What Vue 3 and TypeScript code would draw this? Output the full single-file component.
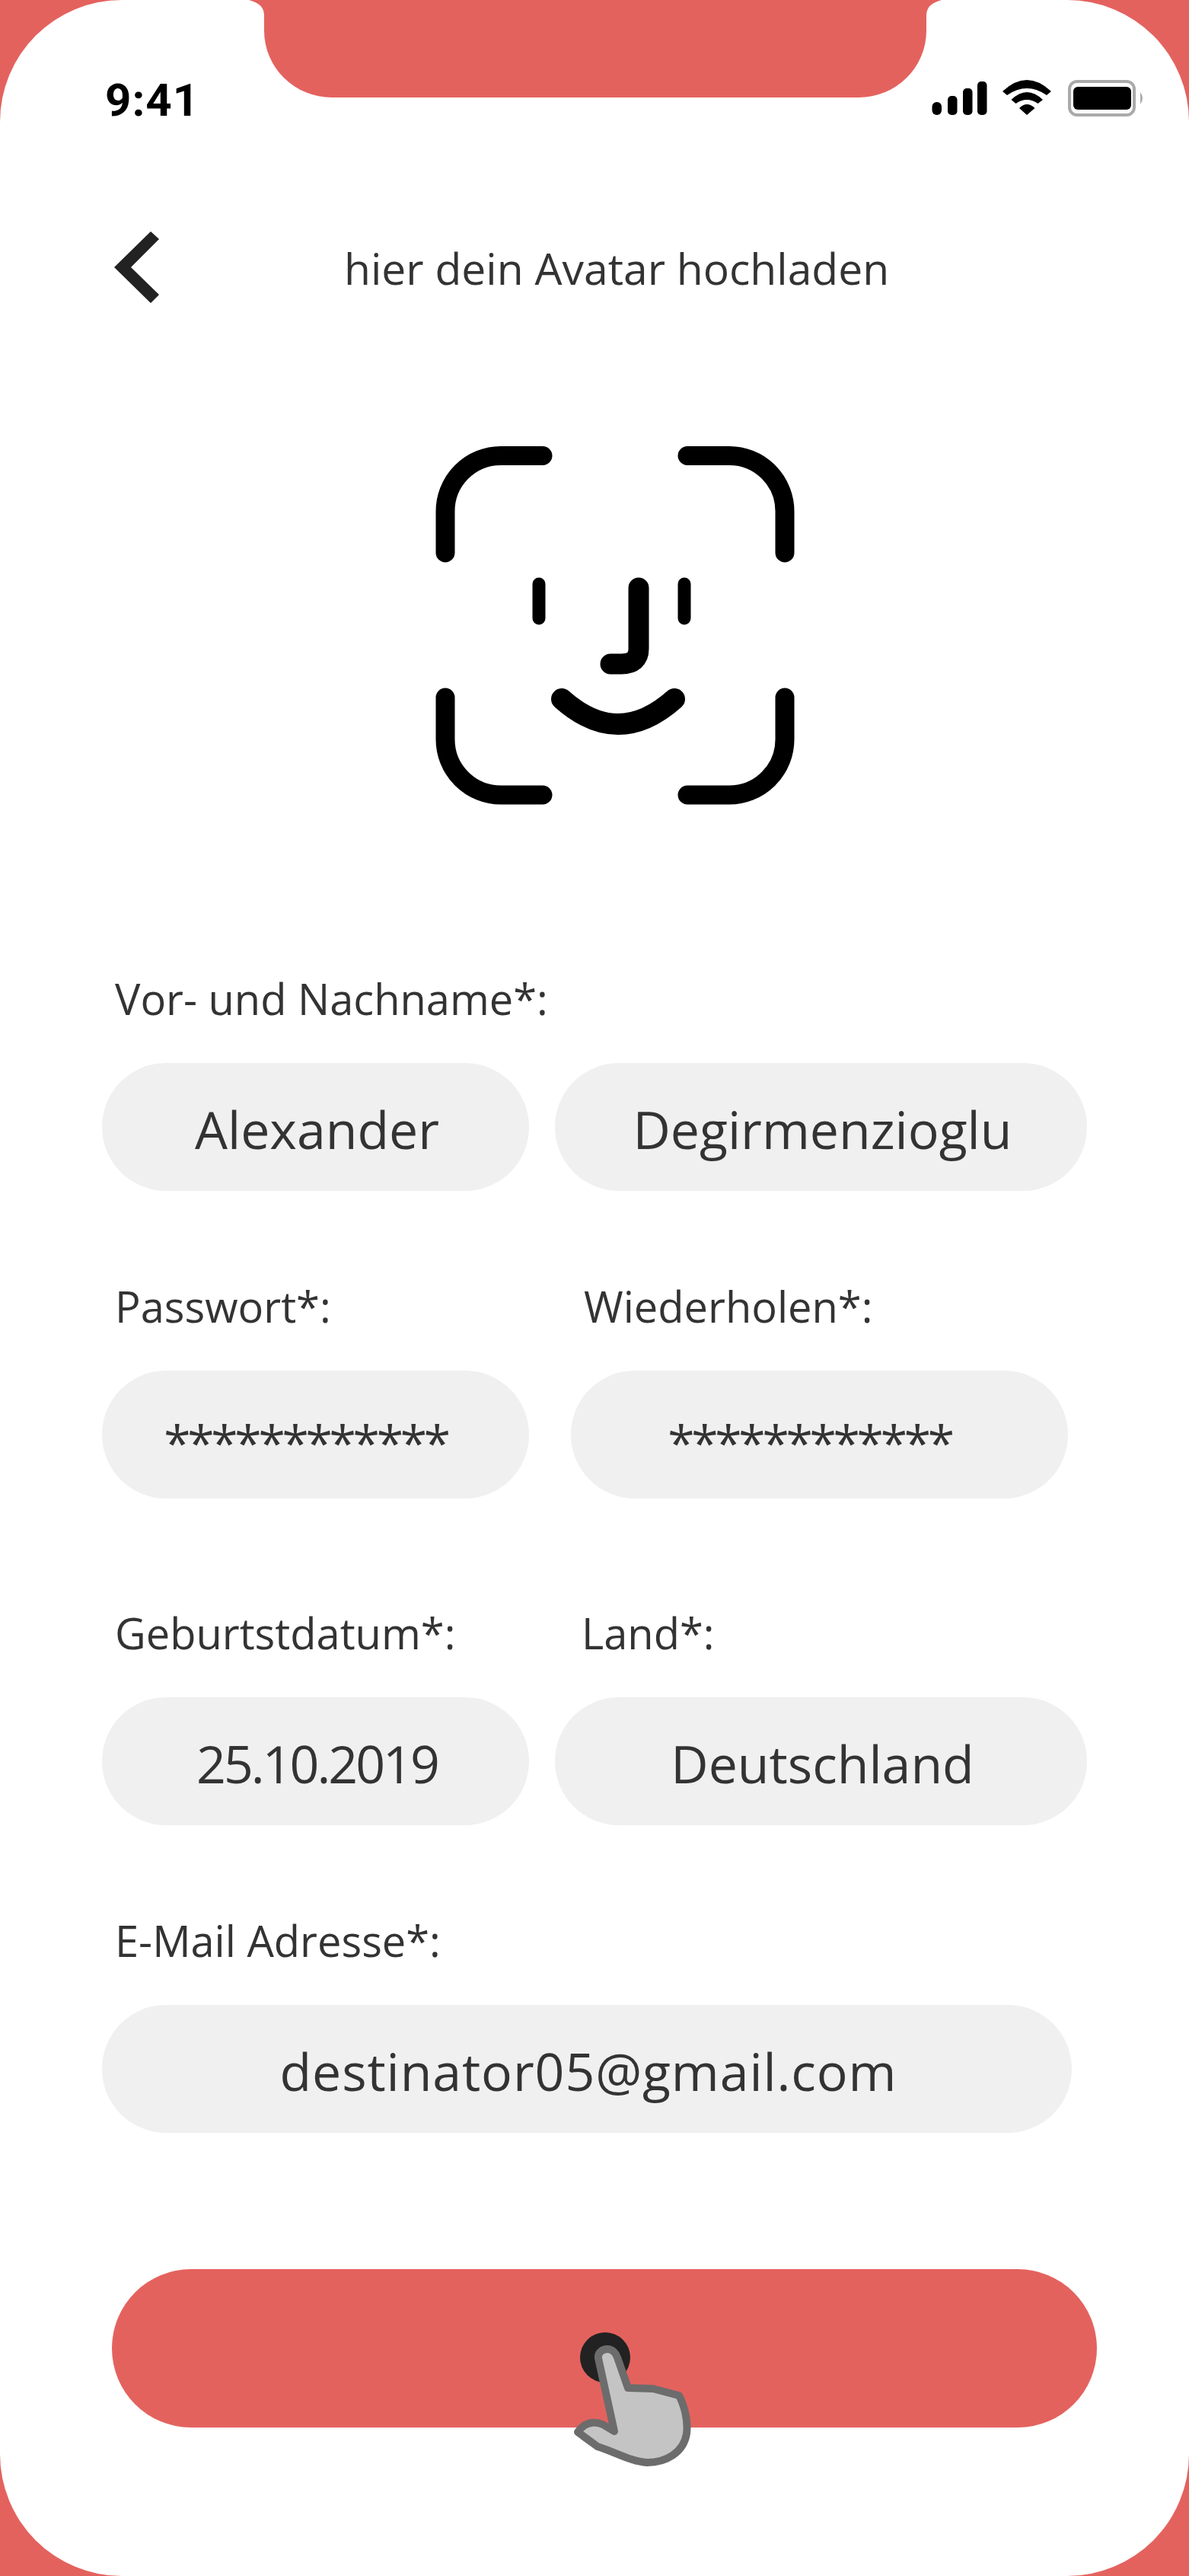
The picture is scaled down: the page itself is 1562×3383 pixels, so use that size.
<script setup lang="ts">
interface Field {
  label: string
  value: string
  cls: string
  textCls?: string
}

interface Row {
  cls: string
  fields: Field[]
}

const rows: Row[] = [
  {
    cls: 'row-name',
    fields: [
      { label: 'Vor- und Nachname*:', value: 'Alexander', cls: 'w-left' },
      { label: '', value: 'Degirmenzioglu', cls: 'w-right' }
    ]
  },
  {
    cls: 'row-pass',
    fields: [
      { label: 'Passwort*:', value: '************', cls: 'w-left', textCls: 'mask' },
      { label: 'Wiederholen*:', value: '************', cls: 'w-repeat', textCls: 'mask' }
    ]
  },
  {
    cls: 'row-birth',
    fields: [
      { label: 'Geburtstdatum*:', value: '25.10.2019', cls: 'w-left', textCls: 'date' },
      { label: 'Land*:', value: 'Deutschland', cls: 'w-right w-land' }
    ]
  },
  {
    cls: 'row-mail',
    fields: [{ label: 'E-Mail Adresse*:', value: 'destinator05@gmail.com', cls: 'w-mail', textCls: 'mail' }]
  }
]
</script>

<template>
  <div class="screen">
    <div class="panel">
      <svg class="notch" width="924" height="128" viewBox="0 0 924 128">
        <path d="M7 0Q27 5 27 20V40A89 88 0 0 0 116 128H808A89 88 0 0 0 897 40V20Q897 5 917 0Z" fill="#e4625e" />
      </svg>

      <div class="status">
        <span class="time">9:41</span>
        <svg class="status-icons" width="281" height="50" viewBox="0 0 281 50">
          <rect x="1.5" y="29" width="12.5" height="17" rx="6" />
          <rect x="22" y="21" width="12.5" height="25" rx="5" />
          <rect x="42" y="11" width="12.5" height="35" rx="5" />
          <rect x="61" y="2" width="12.5" height="44" rx="5" />
          <path d="M94 15Q126 -15 158 15L152 20Q126 2 100 20Z" />
          <path d="M105.5 26Q126 6 147 26L140.5 31Q126 21 111.5 31Z" />
          <path d="M116 37Q126 27 136.5 37L126 46Z" />
          <rect x="182" y="2" width="85" height="44" rx="10" fill="none" stroke="#aaa" stroke-width="4" />
          <rect x="187" y="9" width="76" height="30" rx="6" />
          <path d="M275 16Q281 24 275 32Z" fill="#aaa" />
        </svg>
      </div>

      <div class="head">
        <svg class="back" width="59" height="94" viewBox="0 0 59 94">
          <path d="M48 0L59 10L22 47L59 83L48 94L0 47Z" fill="#222" />
        </svg>
        <span class="title">hier dein Avatar hochladen</span>
      </div>

      <svg class="face" width="520" height="520" viewBox="0 0 520 520" fill="none" stroke="#000" stroke-linecap="round">
        <g stroke-width="25">
          <path d="M45 166V112A73 73 0 0 1 118 38.5H173" />
          <path d="M363 38.5H418A73 73 0 0 1 491 112V166" />
          <path d="M45 356V411A73 73 0 0 0 118 484H173" />
          <path d="M363 484H418A73 73 0 0 0 491 411V356" />
        </g>
        <path d="M168 207V252M359 207V252" stroke-width="17" />
        <path d="M299 212V292Q299 312 276 312H262" stroke-width="27" stroke-linejoin="round" />
        <path d="M198 358Q272 424 346 358" stroke-width="28" />
      </svg>

      <div class="form">
        <div v-for="row in rows" :key="row.cls" class="row" :class="row.cls">
          <div v-for="field in row.fields" :key="field.value + field.cls" class="field" :class="field.cls">
            <div class="label">{{ field.label }}</div>
            <div class="pill" :class="field.textCls">{{ field.value }}</div>
          </div>
        </div>
      </div>

      <div class="action">
        <svg class="hand" width="260" height="240" viewBox="0 0 260 240">
          <circle cx="115" cy="75" r="33" fill="#222" />
          <path
            d="M106 76C105 68 112 64 118 64C124 64 129 69 131 75L145 115L178 116L212 125C220 140 224 160 222 175C218 200 195 213 170 213C150 212 130 200 105 192L79 173C88 160 100 158 112 163L127 172Z"
            fill="#c4c4c4"
            stroke="#6c6c6c"
            stroke-width="10"
            stroke-linejoin="round"
          />
        </svg>
      </div>
    </div>
  </div>
</template>

<style>
html,
body {
  margin: 0;
  background: #e4625e;
}
</style>

<style scoped>
.screen {
  width: 1562px;
  height: 3383px;
  background: #e4625e;
  overflow: hidden;
  font-family: 'Open Sans', 'Noto Sans', sans-serif;
  color: #333;
}

.panel {
  position: relative;
  box-sizing: border-box;
  height: 100%;
  background: #fff;
  border-radius: 160px;
  padding-top: 105px;
}

.notch {
  position: absolute;
  left: 320px;
  top: 0;
}

.status {
  display: flex;
  justify-content: space-between;
  align-items: flex-start;
  padding: 0 58px 0 138px;
  height: 50px;
}

.time {
  padding-top: 3px;
  font-family: Roboto, 'Liberation Sans', sans-serif;
  font-size: 60px;
  font-weight: 700;
  line-height: 47px;
  letter-spacing: 1px;
  color: #000;
}

.status-icons {
  display: block;
}

.head {
  display: flex;
  align-items: center;
  height: 94px;
  margin-top: 149px;
  padding-left: 150px;
}

.back {
  flex: none;
}

.title {
  margin-left: 243px;
  padding-top: 3px;
  font-size: 57px;
  line-height: 91px;
  white-space: nowrap;
}

.face {
  display: block;
  margin: 162px 0 0 540px;
}

.form {
  padding-left: 134px;
}

.row {
  display: flex;
}

.row-name {
  gap: 34px;
  margin-top: 191px;
}

.row-pass {
  gap: 55px;
  margin-top: 111px;
}

.row-birth {
  gap: 34px;
  margin-top: 136px;
}

.row-mail {
  margin-top: 111px;
}

.label {
  height: 80px;
  margin-bottom: 45px;
  padding-left: 17px;
  font-size: 56px;
  line-height: 80px;
  white-space: nowrap;
}

.w-land .label {
  padding-left: 35px;
}

.pill {
  display: flex;
  align-items: center;
  justify-content: center;
  box-sizing: border-box;
  height: 168px;
  padding: 4px 0 0 4px;
  border-radius: 84px;
  background: #f0f0f0;
  font-size: 68px;
  white-space: nowrap;
}

.mask {
  padding: 20px 26px 0 0;
  font-size: 64px;
  letter-spacing: -4.2px;
}

.date {
  letter-spacing: -3px;
}

.mail {
  letter-spacing: 0.9px;
}

.w-left {
  width: 561px;
}

.w-right {
  width: 699px;
}

.w-repeat {
  width: 653px;
}

.w-mail {
  width: 1274px;
}

.action {
  position: relative;
  box-sizing: border-box;
  width: 1294px;
  height: 208px;
  margin: 179px 0 0 147px;
  border-radius: 104px;
  background: #e4625e;
}

.hand {
  position: absolute;
  left: 533px;
  top: 41px;
}
</style>
